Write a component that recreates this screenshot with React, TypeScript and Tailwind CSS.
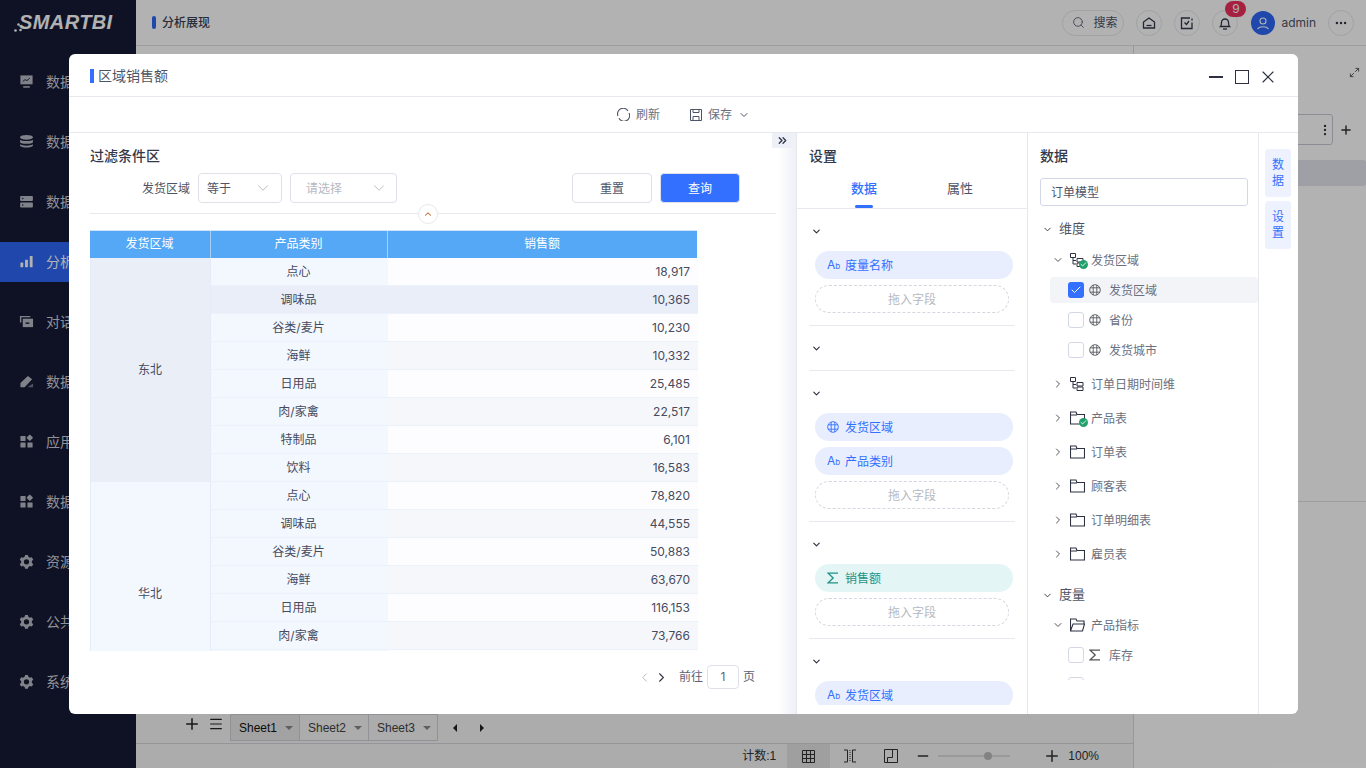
import React from "react";
import { Search, ChevronDown, ChevronRight, ChevronLeft, ChevronUp, Minus, Plus, X, Ellipsis, EllipsisVertical, ChevronsRight, Maximize2, Menu, Check } from "lucide-react";

const I = (p: { children: React.ReactNode; s?: number; c?: string }) => (
  <svg width={p.s ?? 16} height={p.s ?? 16} viewBox="0 0 16 16" className={"shrink-0 " + (p.c ?? "")} fill="currentColor">
    {p.children}
  </svg>
);

const navIcons: Record<string, React.ReactNode> = {
  monitor: <><path d="M1.5 1.5h13v9.5h-13z" /><rect x="4.5" y="13" width="7" height="1.6" /><path d="M4 8l2.5-2 2 1 3-2.5" fill="none" stroke="#161a36" strokeWidth="1" /></>,
  db: <><ellipse cx="8" cy="3.5" rx="6.8" ry="2.5" /><path d="M1.2 6c1 2 12.6 2 13.6 0v3c-1 2-12.6 2-13.6 0z" /><path d="M1.2 11c1 2 12.6 2 13.6 0v1.500c-1 2.500-12.600 2.500-13.600 0z" /></>,
  server: <><rect x="1.200" y="2" width="13.600" height="5.400" rx="1" /><rect x="1.200" y="9" width="13.600" height="5.400" rx="1" /><circle cx="4" cy="4.700" r="0.800" fill="#161a36" /><circle cx="4" cy="11.700" r="0.800" fill="#161a36" /></>,
  bars: <><rect x="1.500" y="9" width="3" height="5" rx=".5" /><rect x="6.500" y="6" width="3" height="8" rx=".5" /><rect x="11.500" y="2" width="3" height="12" rx=".5" /></>,
  chat: <><path d="M1 2h11v1.500H2.500V9H1z" /><path d="M4 5h11v9H4z" /><rect x="7" y="9" width="4" height="1.500" fill="#161a36" /></>,
  edit: <><path d="M1.500 14V9.500L9.500 2l4.500 3.500-8 8.500z" /><path d="M9 14h6v-4z" opacity=".6" /></>,
  apps: <><rect x="1.500" y="2" width="5.500" height="5.500" rx=".6" /><rect x="1.500" y="9" width="5.500" height="5.500" rx=".6" /><rect x="9" y="9" width="5.500" height="5.500" rx=".6" /><rect x="9" y="1.500" width="5" height="5" rx=".6" transform="rotate(45 11.500 4)" /></>,
  gear: <path fillRule="evenodd" d="M6.500 1h3l.5 2 1.700 1 2-.6 1.500 2.600-1.500 1.400v2l1.500 1.400-1.500 2.600-2-.6-1.700 1-.5 2h-3l-.5-2-1.700-1-2 .6L.8 10.800l1.500-1.400v-2L.8 6l1.500-2.600 2 .6L6 3zM8 5.500a2.800 2.800 0 100 5.600 2.800 2.800 0 000-5.600z" />,
};

const nav: [string, string, boolean?][] = [
  ["monitor", "数据大屏"],
  ["db", "数据连接"],
  ["server", "数据准备"],
  ["bars", "分析展现", true],
  ["chat", "对话分析"],
  ["edit", "数据填报"],
  ["apps", "应用市场"],
  ["apps", "数据门户"],
  ["gear", "资源管理"],
  ["gear", "公共设置"],
  ["gear", "系统运维"],
];

function Sidebar() {
  return (
    <aside className="w-[136px] shrink-0 bg-[#161a36] flex flex-col">
      <div className="h-[44px] flex items-center pl-[14px]">
        <svg width="10" height="12" viewBox="0 0 10 12" className="mt-[9px] -mr-[5px] text-white shrink-0" fill="currentColor">
          <circle cx="1.500" cy="9.500" r="1.300" />
          <circle cx="4.500" cy="3.500" r="1.300" />
          <circle cx="6.500" cy="9" r="1.300" />
          <circle cx="9" cy="6" r="1" />
        </svg>
        <span className="text-white italic font-bold text-[20px] tracking-[0.4px] leading-none font-['Liberation_Sans',sans-serif]">SMARTBI</span>
      </div>
      <div className="pt-[18px] flex flex-col">
        {nav.map(([ic, t, act], i) => (
          <div key={i} className={"h-[40px] mb-[20px] pb-[2px] flex items-center pl-[19px] gap-[12px] text-[14px] " + (act ? "bg-[#2f67f6] text-white" : "text-[#cfd0d8]")}>
            <span className={act ? "text-white" : "text-[#b8bac5]"}><I s={15}>{navIcons[ic]}</I></span>
            <span>{t}</span>
          </div>
        ))}
      </div>
    </aside>
  );
}

function RoundBtn({ children }: { children: React.ReactNode }) {
  return <div className="w-[26px] h-[26px] rounded-full border border-[#e6e8ee] flex items-center justify-center text-[#33384a]">{children}</div>;
}

function Header() {
  return (
    <header className="h-[46px] shrink-0 border-b border-[#dfe1e6] bg-white flex items-center pl-[16px] pr-[12px] relative">
      <span className="w-[4px] h-[13px] rounded-[2px] bg-[#2f67f6] mr-[6px]" />
      <span className="text-[12px] font-medium text-[#3a3f52]">分析展现</span>
      <div className="ml-auto flex items-center">
        <div className="h-[26px] w-[62px] rounded-full border border-[#e6e8ee] flex items-center pl-[9px] gap-[8px] text-[12px] text-[#4e5466]">
          <Search size={13} strokeWidth={1.500} />
          <span>搜索</span>
        </div>
        <div className="ml-[12px]">
          <RoundBtn>
            <svg width="14" height="14" viewBox="0 0 14 14" fill="none" stroke="currentColor" strokeWidth="1.300"><path d="M1.500 12V6L7 2l5.500 4v6z" /><path d="M4.500 9.500h5" /></svg>
          </RoundBtn>
        </div>
        <div className="ml-[12px]">
          <RoundBtn>
            <svg width="14" height="14" viewBox="0 0 14 14" fill="none" stroke="currentColor" strokeWidth="1.300"><path d="M12 6.500V12.500H1.500V2H10" /><path d="M4.500 6.500L6.500 8.500L9 5" /><path d="M12 2.500v2" /></svg>
          </RoundBtn>
        </div>
        <div className="ml-[12px] relative">
          <RoundBtn>
            <svg width="14" height="14" viewBox="0 0 14 14" fill="none" stroke="currentColor" strokeWidth="1.300"><path d="M2.500 10.500c1-1 1-2.500 1-4a3.500 3.500 0 017 0c0 1.500 0 3 1 4z" /><path d="M5 13h4" /></svg>
          </RoundBtn>
          <span className="absolute -top-[9px] left-[13px] w-[21px] h-[16px] rounded-full bg-[#ee2f5b] text-white text-[12px] leading-[16px] text-center">9</span>
        </div>
        <div className="ml-[13px] w-[24px] h-[24px] rounded-full bg-[#2f67f6] flex items-center justify-center">
          <svg width="18" height="18" viewBox="0 0 18 18" fill="none" stroke="white" strokeWidth="1.100"><circle cx="9" cy="7" r="3" /><path d="M3.500 15c2-3 9-3 11 0" /></svg>
        </div>
        <span className="ml-[6px] text-[12px] text-[#4e5466]">admin</span>
        <div className="ml-[12px]">
          <RoundBtn><Ellipsis size={14} strokeWidth={2.200} /></RoundBtn>
        </div>
      </div>
    </header>
  );
}

function Underlay() {
  return (
    <div className="flex-1 flex min-h-0 bg-white">
      <div className="w-[998px] shrink-0 flex flex-col border-r border-[#d8dade]">
        <div className="flex-1" />
        <div className="h-[30px] bg-[#f6f6f6] border-b border-[#d4d6da] flex items-start text-[12px] text-[#333]">
          <div className="flex items-center text-[#222] ml-[47px] mr-[7px] mt-[1px] gap-[7px]">
            <Plus size={18} strokeWidth={2} />
            <Menu size={16} strokeWidth={1.800} />
          </div>
          {["Sheet1", "Sheet2", "Sheet3"].map((s, i) => (
            <div key={s} className={"w-[70px] h-[27px] border border-[#d0d2d6] -ml-px flex items-center justify-between pl-[8px] pr-[6px] " + (i === 0 ? "bg-[#e8e8e8] text-[#111]" : "bg-[#f6f6f6] text-[#444]")}>
              <span className="font-['Liberation_Sans',sans-serif]">{s}</span>
              <span className="w-0 h-0 border-x-[4px] border-x-transparent border-t-[4px] border-t-[#888]" />
            </div>
          ))}
          <span className="ml-[15px] mt-[10px] w-0 h-0 border-y-[4px] border-y-transparent border-r-[4px] border-r-[#222]" />
          <span className="ml-[23px] mt-[10px] w-0 h-0 border-y-[4px] border-y-transparent border-l-[4px] border-l-[#222]" />
        </div>
        <div className="h-[24px] bg-[#f6f6f6] flex items-center justify-end text-[12px] text-[#333] font-['Liberation_Sans','Noto_Sans_CJK_SC',sans-serif]">
          <span className="mr-[11px] pb-[1px]">计数:1</span>
          <div className="w-[43px] h-[24px] bg-[#e4e4e4] flex items-center justify-center">
            <svg width="13" height="13" viewBox="0 0 13 13" fill="none" stroke="#333"><path d="M.5.500h12v12H.5zM.5 4.500h12M.5 8.500h12M4.500.500v12M8.500.500v12" /></svg>
          </div>
          <svg width="14" height="14" viewBox="0 0 14 14" fill="none" stroke="#333" className="ml-[13px]"><path d="M1 1h3.500v12H1M13 1H9.500v12H13" /><path d="M7 1v12" strokeDasharray="1 1" /></svg>
          <svg width="14" height="14" viewBox="0 0 14 14" fill="none" stroke="#333" className="ml-[27px]"><path d="M.5.500h13v13H.5zM8.500.500v8h-5v5" /></svg>
          <Minus size={16} strokeWidth={2} className="ml-[17px] text-[#333]" />
          <div className="ml-[7px] w-[72px] h-[2px] bg-[#dcdcdc] relative">
            <span className="absolute left-[46px] -top-[3px] w-[8px] h-[8px] rounded-full bg-[#bbbbbb]" />
          </div>
          <Plus size={18} strokeWidth={2} className="ml-[33px] text-[#333]" />
          <span className="ml-[7px] mr-[34px] pb-[1px] text-[#333]">100%</span>
        </div>
      </div>
      <div className="flex-1 flex flex-col relative text-[#333]">
        <Maximize2 size={11} className="absolute left-[215px] top-[21px] text-[#555]" />
        <div className="mt-[68px] ml-[8px] mr-[33px] h-[31px] border border-[#c8cbd4] rounded-[3px] flex items-center justify-end">
          <EllipsisVertical size={14} />
        </div>
        <Plus size={14} strokeWidth={2.500} className="absolute left-[205px] top-[77px]" />
        <div className="mt-[15px] ml-[8px] mr-0 h-[26px] rounded-[3px] bg-[#e2e5ee]" />
        <div className="mt-[315px] border-t border-[#e0e2e6]" />
      </div>
    </div>
  );
}

const Globe = ({ c = "#55585f", s = 12 }: { c?: string; s?: number }) => (
  <svg width={s} height={s} viewBox="0 0 12 12" fill="none" stroke={c} strokeWidth=".9" className="shrink-0">
    <circle cx="6" cy="6" r="5.300" />
    <path d="M4.200 1v10M7.800 1v10M1 3.800h10M1 8.200h10" />
  </svg>
);
const SigmaIcon = ({ c = "#555", s = 12 }: { c?: string; s?: number }) => (
  <svg width={s} height={s} viewBox="0 0 12 12" fill="none" stroke={c} strokeWidth="1.300" className="shrink-0">
    <path d="M11 1.200H1.200L6.200 6 1.200 10.800H11" />
  </svg>
);
const Ab = () => (
  <span className="text-[#3370ff] w-[12px] shrink-0 leading-none whitespace-nowrap"><span className="text-[12px]">A</span><span className="text-[8px]">b</span></span>
);

function Pill({ icon, text, green }: { icon: React.ReactNode; text: string; green?: boolean }) {
  return (
    <div className={"h-[28px] w-[198px] rounded-full flex items-center pl-[12px] gap-[6px] text-[12px] " + (green ? "bg-[#e3f6f5] text-[#1e9385]" : "bg-[#e8eefe] text-[#3370ff]")}>
      {icon}
      <span className="pt-[2px]">{text}</span>
    </div>
  );
}
const Drop = () => (
  <div className="h-[28px] w-[194px] rounded-full border border-dashed border-[#d4d7e0] flex items-center justify-center pt-[2px] text-[12px] text-[#b6b9c2]">拖入字段</div>
);
const Sect = ({ children, last }: { children?: React.ReactNode; last?: boolean }) => (
  <div className={"pt-[17px] pb-[12px] " + (last ? "" : "border-b border-[#e8e9ee]")}>
    <ChevronDown size={11} strokeWidth={2.500} className="ml-[2px] text-[#2d3142]" />
    {children ? <div className="mt-[14px] ml-[6px] flex flex-col gap-[6px]">{children}</div> : <div className="h-[4px]" />}
  </div>
);

function SettingsPanel() {
  return (
    <div className="w-[232px] shrink-0 border-l border-r border-[#e6e8ee] flex flex-col overflow-hidden">
      <div className="pl-[12px] pt-[13px] text-[14px] font-medium text-[#33384a] leading-[20px]">设置</div>
      <div className="h-[43px] border-b border-[#e6e8ee] flex text-[13px] relative">
        <div className="w-[116px] text-center pt-[13px] font-medium text-[#3370ff] relative pl-[18px]">
          数据
          <span className="absolute left-[58px] bottom-0 w-[18px] h-[3px] rounded-full bg-[#3370ff]" />
        </div>
        <div className="w-[94px] text-center pt-[13px] text-[#4e5466]">属性</div>
      </div>
      <div className="px-[12px] flex-1 overflow-hidden mb-[9px]">
        <Sect><Pill icon={<Ab />} text="度量名称" /><Drop /></Sect>
        <Sect />
        <Sect>
          <Pill icon={<Globe c="#3370ff" />} text="发货区域" />
          <Pill icon={<Ab />} text="产品类别" />
          <Drop />
        </Sect>
        <Sect><Pill green icon={<SigmaIcon c="#1e9385" />} text="销售额" /><Drop /></Sect>
        <Sect last><Pill icon={<Ab />} text="发货区域" /></Sect>
      </div>
    </div>
  );
}

const Ok = () => (
  <span className="absolute -right-[3px] -bottom-[2px] w-[9px] h-[9px] rounded-full bg-[#22a06b] flex items-center justify-center text-white">
    <Check size={7} strokeWidth={3} />
  </span>
);
const Hier = ({ ok }: { ok?: boolean }) => (
  <span className="relative shrink-0 w-[15px] h-[14px] mr-[6px]">
    <svg width="15" height="14" viewBox="0 0 15 14" fill="none" stroke="#2d3142" strokeWidth="1">
      <path d="M.5.500h5v4h-5zM3 4.500V11h3M3 7.500h3M7 5.500h6v3.500H7zM7 10h6v3.500H7z" />
    </svg>
    {ok && <Ok />}
  </span>
);
const Folder = ({ ok, open }: { ok?: boolean; open?: boolean }) => (
  <span className="relative shrink-0 w-[15px] h-[14px] mr-[6px]">
    <svg width="15" height="14" viewBox="0 0 15 14" fill="none" stroke="#2d3142" strokeWidth="1.100">
      {open ? <path d="M.5 13V1h5.500l1 2h7v3M.5 13l2.500-7h11.500l-2 7z" /> : <path d="M.5 13V1h5.500l1 2.500h7.500V13zM.5 4h6.500" />}
    </svg>
    {ok && <Ok />}
  </span>
);

function Cb({ on }: { on?: boolean }) {
  return (
    <span className={"w-[16px] h-[16px] rounded-[3px] shrink-0 flex items-center justify-center " + (on ? "bg-[#3370ff] text-white" : "border border-[#d4d7e6] bg-white")}>
      {on && <Check size={12} strokeWidth={2} />}
    </span>
  );
}
function Leaf({ text, on, sel, icon }: { text: string; on?: boolean; sel?: boolean; icon?: React.ReactNode }) {
  return (
    <div className="h-[30px] flex items-center">
      <div className={"h-[26px] flex-1 ml-[10px] pl-[18px] flex items-center rounded-[4px] " + (sel ? "bg-[#f3f4f8]" : "")}>
        <Cb on={on} />
        <span className="ml-[5px] mr-[8px]">{icon ?? <Globe />}</span>
        <span className="pt-[2px] text-[12px] text-[#6b7080]">{text}</span>
      </div>
    </div>
  );
}
function Branch({ text, icon, open, h = "h-[34px]" }: { text: string; icon: React.ReactNode; open?: boolean; h?: string }) {
  return (
    <div className={h + " flex items-center pl-[12px] text-[12px] text-[#6b7080]"}>
      {open ? <ChevronDown size={12} className="text-[#555] mr-[6px] shrink-0" /> : <ChevronRight size={12} className="text-[#555] mr-[6px] shrink-0" />}
      {icon}
      <span className="pt-[2px]">{text}</span>
    </div>
  );
}
const Root = ({ text, mt = "" }: { text: string; mt?: string }) => (
  <div className={"h-[30px] flex items-center pl-[2px] text-[13px] text-[#4e5466] " + mt}>
    <ChevronDown size={11} strokeWidth={2} className="text-[#333] mr-[6px] shrink-0" />
    <span>{text}</span>
  </div>
);

function DataPanel() {
  return (
    <div className="w-[231px] shrink-0 flex flex-col border-r border-[#e6e8ee]">
      <div className="pl-[12px] pt-[13px] text-[14px] font-medium text-[#33384a] leading-[20px]">数据</div>
      <div className="ml-[12px] mt-[12px] w-[208px] h-[28px] border border-[#d4d7e6] rounded-[3px] flex items-center pl-[10px] pt-[1px] text-[12px] text-[#4e5466]">订单模型</div>
      <div className="mt-[8px] h-[466px] overflow-hidden pl-[12px]">
        <Root text="维度" />
        <div className="mt-[1px]">
          <Branch h="h-[30px]" text="发货区域" open icon={<Hier ok />} />
          <Leaf text="发货区域" on sel />
          <Leaf text="省份" />
          <Leaf text="发货城市" />
          <div className="mt-[2px]">
            <Branch text="订单日期时间维" icon={<Hier />} />
            <Branch text="产品表" icon={<Folder ok />} />
            <Branch text="订单表" icon={<Folder />} />
            <Branch text="顾客表" icon={<Folder />} />
            <Branch text="订单明细表" icon={<Folder />} />
            <Branch text="雇员表" icon={<Folder />} />
          </div>
        </div>
        <Root text="度量" mt="mt-[9px]" />
        <div className="mt-[0px]">
          <Branch h="h-[30px]" text="产品指标" open icon={<Folder open />} />
          <Leaf text="库存" icon={<SigmaIcon />} />
          <Leaf text="" icon={<span className="block w-[12px]" />} />
        </div>
      </div>
    </div>
  );
}

type Row = [string, string];
const groups: { name: string; bg: string; rows: Row[] }[] = [
  { name: "东北", bg: "bg-[#e9eef7]", rows: [["点心", "18,917"], ["调味品", "10,365"], ["谷类/麦片", "10,230"], ["海鲜", "10,332"], ["日用品", "25,485"], ["肉/家禽", "22,517"], ["特制品", "6,101"], ["饮料", "16,583"]] },
  { name: "华北", bg: "bg-[#f3f7fe]", rows: [["点心", "78,820"], ["调味品", "44,555"], ["谷类/麦片", "50,883"], ["海鲜", "63,670"], ["日用品", "116,153"], ["肉/家禽", "73,766"], ["", ""], ["", ""]] },
];

function DataTable() {
  return (
    <div className="mt-[16px] w-[609px] h-[421px] overflow-hidden text-[12px] text-[#464b5e]">
      <div className="grid grid-cols-[121px_177px_309px] w-[607px] h-[28px] bg-[#55a8f5] border-t border-[#cfe4fb] text-white text-center leading-[26px]">
        <div className="border-r border-[#a5d0f8] pr-[1px]">发货区域</div>
        <div className="border-r border-[#a5d0f8] pr-[1px]">产品类别</div>
        <div className="pr-[1px]">销售额</div>
      </div>
      {groups.map((g) => (
        <div key={g.name} className="grid grid-cols-[121px_487px]">
          <div className={"flex items-center justify-center pr-[1px] border-l border-r border-[#e6ecf7] " + g.bg}>{g.name}</div>
          <div>
            {g.rows.map(([c, v], i) => {
              const hot = g.name === "东北" && i === 1;
              return (
                <div key={i} className="grid grid-cols-[177px_310px] h-[28px] leading-[27px] border-b border-[#edf1f9]">
                  <div className={"text-center pr-[2px] " + (hot ? "bg-[#e9eef8]" : "bg-[#f3f7fe]")}>{c}</div>
                  <div className={"text-right pr-[8px] " + (hot ? "bg-[#e9eef8]" : i % 2 ? "bg-[#f6f7fb]" : "bg-[#fdfdff]")}>{v}</div>
                </div>
              );
            })}
          </div>
        </div>
      ))}
    </div>
  );
}

function LeftPanel() {
  return (
    <div className="flex-1 min-w-0 relative pl-[21px] pt-[13px] flex flex-col">
      <div className="absolute right-0 top-0 bottom-0 w-[18px] bg-gradient-to-r from-white to-[#eef0f6]" />
      <div className="absolute right-[3px] top-0 w-[21px] h-[15px] bg-[#eef0f8] flex items-center justify-center text-[#33384a]">
        <ChevronsRight size={13} strokeWidth={2.500} />
      </div>
      <div className="text-[14px] font-medium text-[#33384a] leading-[20px]">过滤条件区</div>
      <div className="mt-[7px] flex items-center h-[30px] text-[12px]">
        <span className="ml-[52px] w-[48px] pt-[1px] text-[#4e5466]">发货区域</span>
        <div className="ml-[8px] w-[84px] h-[30px] border border-[#dfe1ea] rounded-[4px] flex items-center justify-between pl-[8px] pr-[9px] text-[#4e5466]">
          <span className="pt-[2px]">等于</span><ChevronDown size={18} strokeWidth={0.900} className="text-[#9a9daa]" />
        </div>
        <div className="ml-[8px] w-[107px] h-[30px] border border-[#dfe1ea] rounded-[4px] flex items-center justify-between pl-[15px] pr-[8px] text-[#b6b9c2]">
          <span className="pt-[2px]">请选择</span><ChevronDown size={18} strokeWidth={0.900} className="text-[#9a9daa]" />
        </div>
        <button className="ml-[175px] w-[80px] h-[30px] pt-[2px] border border-[#dfe1ea] rounded-[4px] text-[#4e5466]">重置</button>
        <button className="ml-[8px] w-[80px] h-[30px] pt-[2px] border border-[#dfe1ea] rounded-[4px] bg-[#3370ff] text-white">查询</button>
      </div>
      <div className="mt-[10px] w-[686px] border-t border-[#e8e9ee] relative">
        <span className="absolute left-[328px] -top-[10px] w-[20px] h-[20px] rounded-full border border-[#e8e9ee] bg-white flex items-center justify-center text-[#c0622d]">
          <ChevronUp size={10} strokeWidth={2.500} />
        </span>
      </div>
      <DataTable />
      <div className="mt-[14px] w-[665px] flex items-center justify-end text-[12px] text-[#5e6374]">
        <ChevronLeft size={15} strokeWidth={1.500} className="text-[#b6b9c2]" />
        <ChevronRight size={15} strokeWidth={1.800} className="ml-[2px] text-[#33384a]" />
        <span className="ml-[10px]">前往</span>
        <span className="ml-[4px] w-[32px] h-[24px] border border-[#dfe1ea] rounded-[4px] flex items-center justify-center">1</span>
        <span className="ml-[4px]">页</span>
      </div>
    </div>
  );
}

function Dialog() {
  return (
    <div className="absolute left-[69px] top-[54px] w-[1229px] h-[660px] bg-white rounded-[6px] flex flex-col overflow-hidden">
      <div className="h-[43px] shrink-0 border-b border-[#e6e8ee] flex items-center pt-[2px] pl-[21px] pr-[20px]">
        <span className="w-[4px] h-[14px] bg-[#3370ff] mr-[4px]" />
        <span className="pb-[2px] text-[14px] text-[#4e5466]">区域销售额</span>
        <div className="ml-auto flex items-center text-[#2d3142] gap-[10px] pt-[2px]">
          <span className="w-[14px] h-[2px] bg-[#2d3142]" />
          <span className="ml-[2px] w-[14px] h-[14px] border border-[#2d3142]" />
          <X size={20} strokeWidth={1.400} className="-ml-[1px]" />
        </div>
      </div>
      <div className="h-[36px] shrink-0 border-b border-[#e6e8ee] flex items-center justify-center text-[12px] text-[#6b7080]">
        <svg width="13" height="13" viewBox="0 0 13 13" fill="none" stroke="#4e5466" strokeWidth="1.100"><path d="M1 8A5.600 5.600 0 0 1 11 3M12 5A5.600 5.600 0 0 1 2 10.200" /></svg>
        <span className="ml-[6px]">刷新</span>
        <svg width="12" height="12" viewBox="0 0 12 12" fill="none" stroke="#4e5466" className="ml-[30px]"><path d="M.5.500h11v11h-11zM3 .500v3h6v-3M3 11.500V7.500h6v4" /></svg>
        <span className="ml-[6px]">保存</span>
        <ChevronDown size={12} className="ml-[6px] text-[#4e5466]" />
      </div>
      <div className="flex-1 min-h-0 flex">
        <LeftPanel />
        <SettingsPanel />
        <DataPanel />
        <div className="w-[39px] shrink-0 pl-[6px] pt-[16px] flex flex-col gap-[4px] text-[12px] text-[#3370ff] text-center leading-[16px]">
          <div className="w-[26px] h-[48px] bg-[#edf2fe] rounded-[3px] flex items-center justify-center">数<br />据</div>
          <div className="w-[26px] h-[48px] bg-[#edf2fe] rounded-[3px] flex items-center justify-center">设<br />置</div>
        </div>
      </div>
    </div>
  );
}

export default function App() {
  return (
    <div className="relative w-[1366px] h-[768px] overflow-hidden flex font-['Inter','Noto_Sans_CJK_SC',sans-serif]">
      <Sidebar />
      <div className="flex-1 min-w-0 flex flex-col">
        <Header />
        <Underlay />
      </div>
      <div className="absolute inset-0 bg-black/30" />
      <Dialog />
    </div>
  );
}
